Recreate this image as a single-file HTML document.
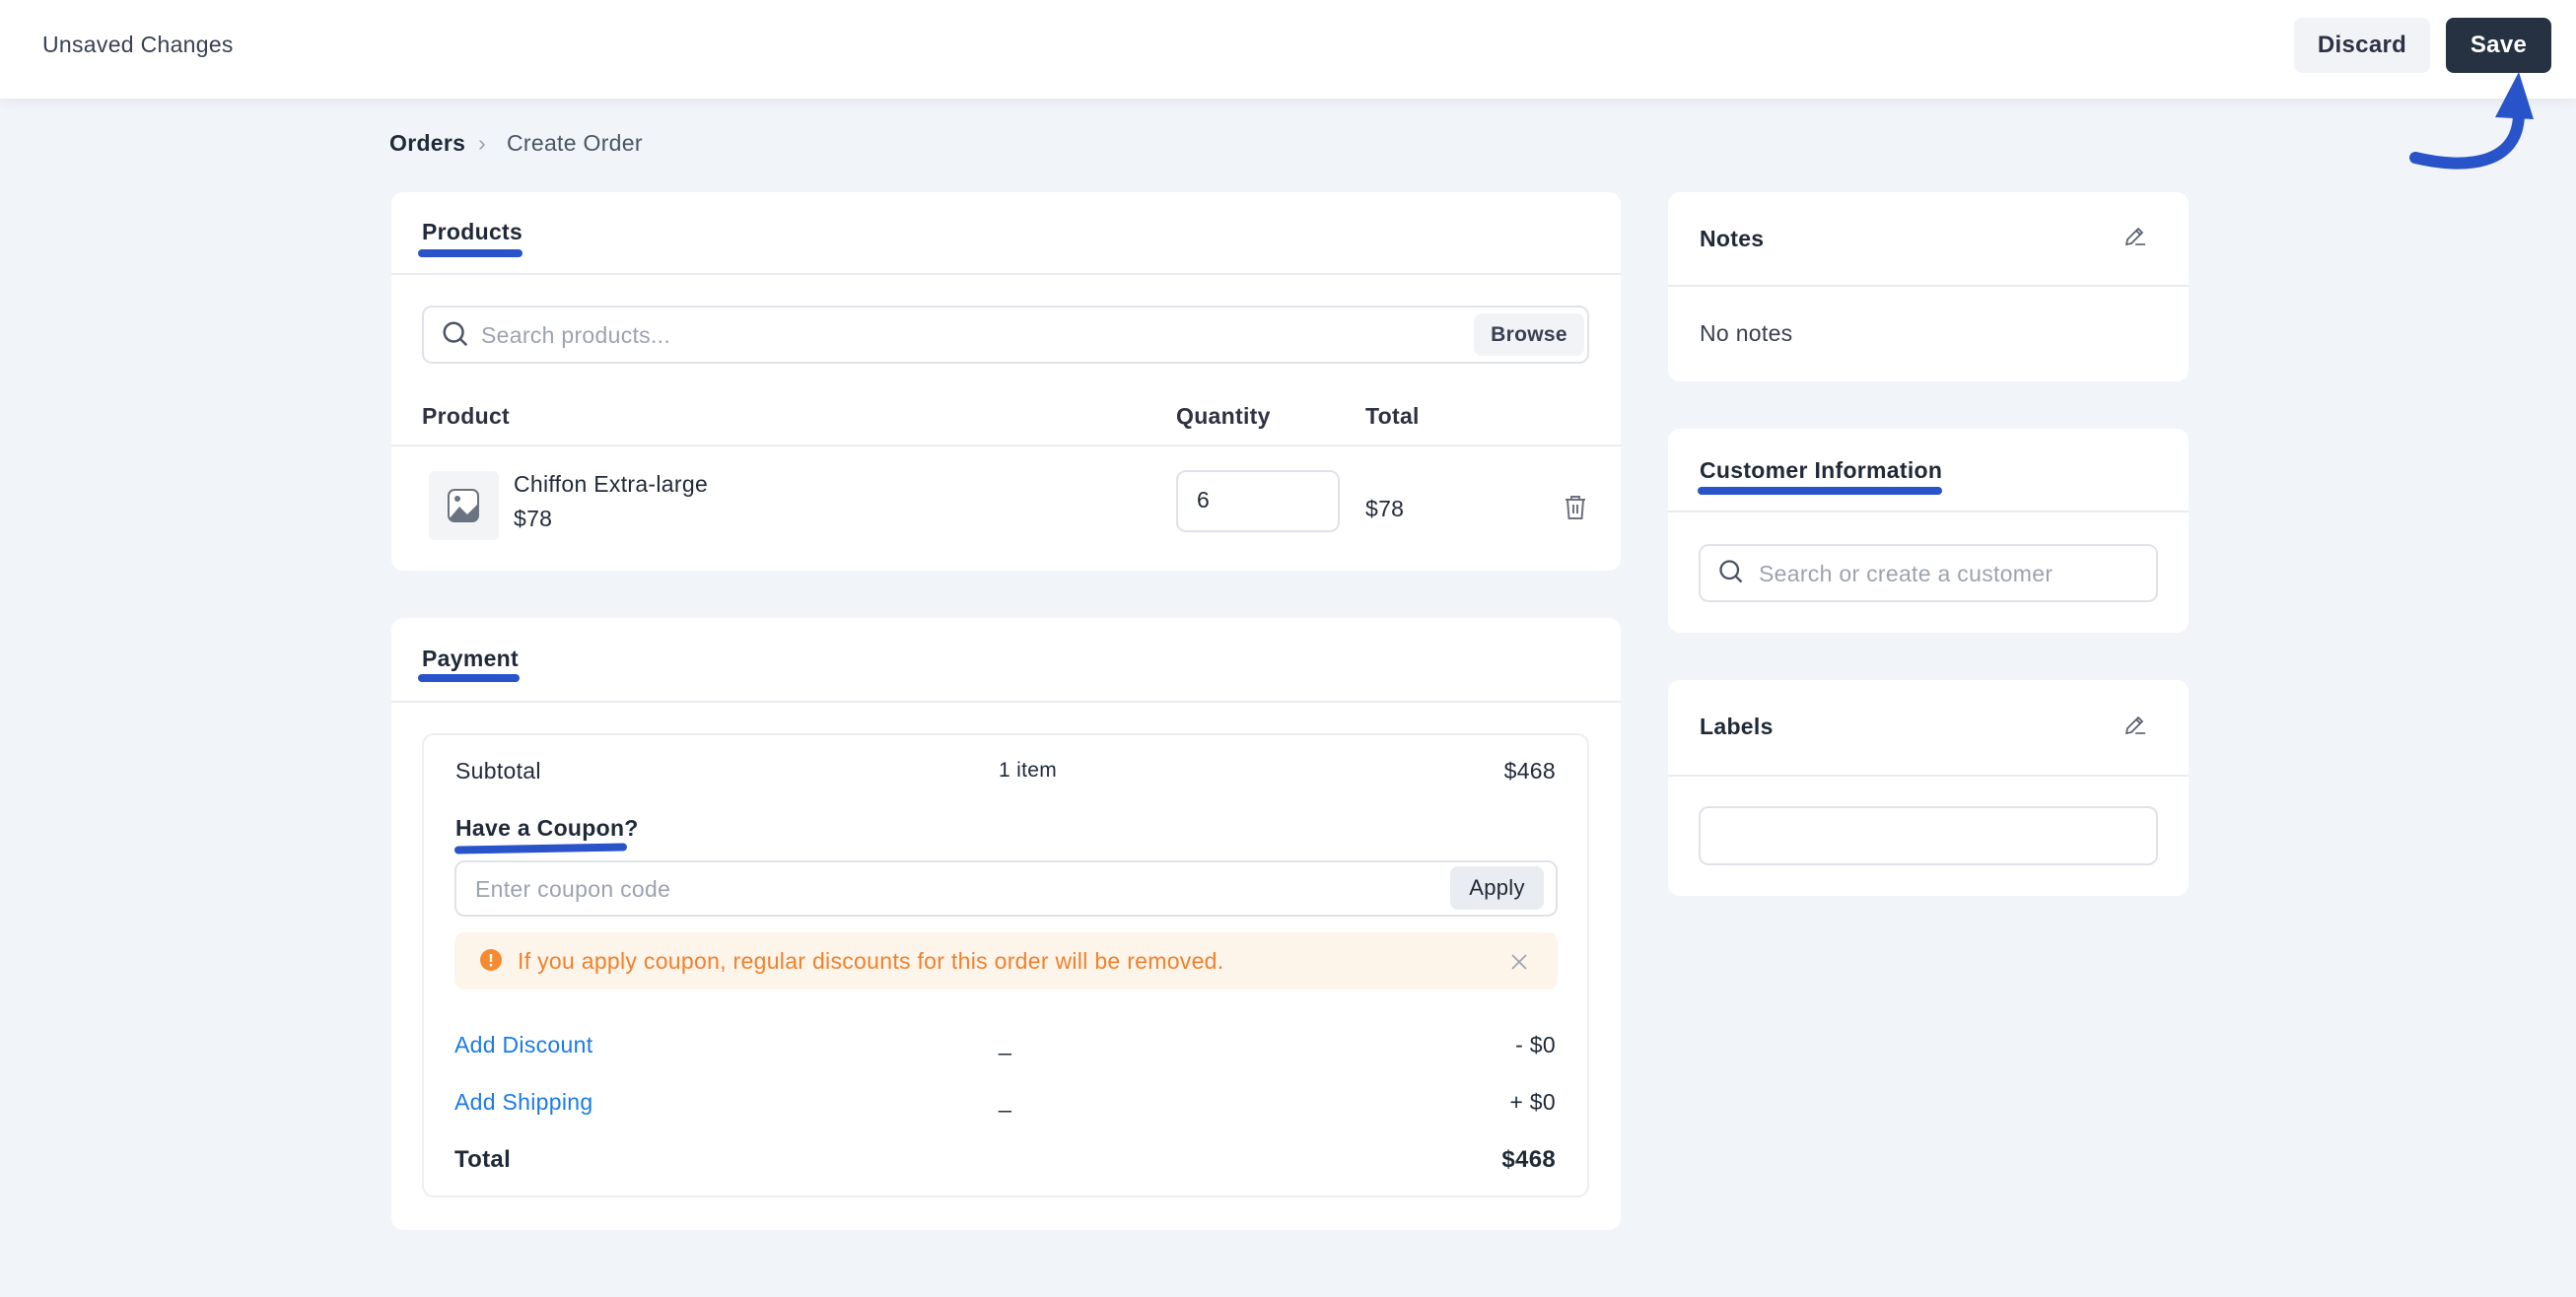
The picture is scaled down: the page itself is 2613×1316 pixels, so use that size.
<!DOCTYPE html>
<html><head><meta charset="utf-8"><style>
*{box-sizing:border-box;margin:0;padding:0}
body{width:2613px;height:1316px;background:#f1f4f9;font-family:"Liberation Sans",sans-serif;color:#1f2937;position:relative;overflow:hidden;font-size:23px;letter-spacing:0.3px}
.a{position:absolute;white-space:nowrap}
.hdr{position:absolute;left:0;top:0;width:2613px;height:100px;background:#fff;box-shadow:0 2px 14px rgba(0,0,0,0.07)}
.card{position:absolute;background:#fff;border-radius:12px}
.line{position:absolute;height:2px;background:#e8ebf0}
.inp{position:absolute;border:2px solid #dfe3e9;border-radius:10px;background:#fff}
.t{line-height:40px;height:40px}
.ttl{font-weight:bold;color:#1f2937}
.ul{position:absolute;height:8px;background:#2853c9;border-radius:4px}
.ph{color:#9ca3af}
.btn{position:absolute;background:#f1f3f6;border-radius:8px;text-align:center;font-weight:bold;color:#374151}
.blue{color:#1a7ae8}
</style></head><body>
<div class="hdr"></div>
<div class="a t" style="left:43px;top:25px;color:#374151">Unsaved Changes</div>
<div class="btn" style="left:2327px;top:18px;width:138px;height:56px;line-height:56px;font-size:24px;color:#2d3142">Discard</div>
<div class="btn" style="left:2481px;top:18px;width:107px;height:56px;line-height:56px;background:#263242;color:#fff;font-size:24px">Save</div>
<svg class="a" style="left:2420px;top:60px" width="190" height="120" viewBox="2420 60 190 120">
<path d="M2450 160 C2500 172 2555 168 2555 115" stroke="#2853c9" stroke-width="12" fill="none" stroke-linecap="round"/>
<path d="M2531 119 L2555 73 L2570 121 Z" fill="#2853c9"/>
</svg>

<div class="a t" style="left:395px;top:125px;font-weight:bold">Orders</div>
<div class="a t" style="left:485px;top:125px;color:#9ca3af">›</div>
<div class="a t" style="left:514px;top:125px;color:#4b5563">Create Order</div>

<!-- Products -->
<div class="card" style="left:397px;top:195px;width:1247px;height:384px"></div>
<div class="a t ttl" style="left:428px;top:215px">Products</div>
<div class="ul" style="left:424px;top:253px;width:106px"></div>
<div class="line" style="left:397px;top:277px;width:1247px"></div>
<div class="inp" style="left:428px;top:310px;width:1184px;height:59px"></div>
<svg class="a" style="left:447px;top:324px" width="30" height="30" viewBox="0 0 24 24" fill="none" stroke="#4b5563" stroke-width="2"><circle cx="10.5" cy="10.5" r="7.5"/><path d="M16 16l5 5"/></svg>
<div class="a t ph" style="left:488px;top:320px">Search products...</div>
<div class="btn" style="left:1495px;top:318px;width:112px;height:43px;line-height:43px;font-size:21px;font-weight:bold">Browse</div>
<div class="a t" style="left:428px;top:402px;font-weight:bold;color:#2d3142">Product</div>
<div class="a t" style="left:1193px;top:402px;font-weight:bold;color:#2d3142">Quantity</div>
<div class="a t" style="left:1385px;top:402px;font-weight:bold;color:#2d3142">Total</div>
<div class="line" style="left:397px;top:451px;width:1247px"></div>
<div class="a" style="left:435px;top:478px;width:71px;height:70px;background:#f3f4f6;border-radius:6px"></div>
<svg class="a" style="left:454px;top:496px" width="32" height="34" viewBox="0 0 32 34"><rect x="1" y="1" width="30" height="32" rx="6" fill="#fff" stroke="#6b7280" stroke-width="2"/><path d="M2 30 L12 18 L20 26 L30 16 L30 32 L2 32Z" fill="#6b7280"/><circle cx="10" cy="10" r="3" fill="#6b7280"/></svg>
<div class="a t" style="left:521px;top:471px">Chiffon Extra-large</div>
<div class="a t" style="left:521px;top:506px">$78</div>
<div class="inp" style="left:1193px;top:477px;width:166px;height:63px"></div>
<div class="a t" style="left:1214px;top:487px">6</div>
<div class="a t" style="left:1385px;top:496px">$78</div>
<svg class="a" style="left:1586px;top:502px" width="24" height="26" viewBox="0 0 24 26" fill="none" stroke="#6b7280" stroke-width="2"><path d="M2 5h20M8 5V2h8v3M4 5l1.5 19h13L20 5M10 10v9M14 10v9"/></svg>

<!-- Payment -->
<div class="card" style="left:397px;top:627px;width:1247px;height:621px"></div>
<div class="a t ttl" style="left:428px;top:648px">Payment</div>
<div class="ul" style="left:424px;top:684px;width:103px"></div>
<div class="line" style="left:397px;top:711px;width:1247px"></div>
<div class="a" style="left:428px;top:744px;width:1184px;height:471px;border:2px solid #eceef2;border-radius:12px"></div>
<div class="a t" style="left:462px;top:762px">Subtotal</div>
<div class="a t" style="left:1013px;top:762px;font-size:21px">1 item</div>
<div class="a t" style="right:1035px;top:762px">$468</div>
<div class="a t ttl" style="left:462px;top:820px">Have a Coupon?</div>
<div class="ul" style="left:461px;top:857px;width:175px;transform:skewY(-1deg)"></div>
<div class="inp" style="left:461px;top:873px;width:1119px;height:57px"></div>
<div class="a t ph" style="left:482px;top:882px">Enter coupon code</div>
<div class="btn" style="left:1471px;top:879px;width:95px;height:44px;line-height:44px;font-size:22px;background:#e9ecf1;font-weight:normal;color:#1f2937">Apply</div>
<div class="a" style="left:461px;top:946px;width:1119px;height:58px;background:#fdf4ea;border-radius:10px"></div>
<svg class="a" style="left:487px;top:963px" width="22" height="22" viewBox="0 0 22 22"><circle cx="11" cy="11" r="11" fill="#f58a2f"/><rect x="9.8" y="5" width="2.4" height="8" fill="#fff"/><rect x="9.8" y="15" width="2.4" height="2.4" fill="#fff"/></svg>
<div class="a t" style="left:525px;top:955px;color:#f0812c">If you apply coupon, regular discounts for this order will be removed.</div>
<svg class="a" style="left:1532px;top:967px" width="18" height="18" viewBox="0 0 18 18" stroke="#9ca3af" stroke-width="1.6"><path d="M2 2l14 14M16 2L2 16"/></svg>
<div class="a t blue" style="left:461px;top:1040px">Add Discount</div>
<div class="a t" style="left:1013px;top:1038px">_</div>
<div class="a t" style="right:1035px;top:1040px">- $0</div>
<div class="a t blue" style="left:461px;top:1098px">Add Shipping</div>
<div class="a t" style="left:1013px;top:1096px">_</div>
<div class="a t" style="right:1035px;top:1098px">+ $0</div>
<div class="a t ttl" style="left:461px;top:1157px;font-size:24px">Total</div>
<div class="a t ttl" style="right:1035px;top:1157px;font-size:24px">$468</div>

<!-- Right -->
<div class="card" style="left:1692px;top:195px;width:528px;height:192px"></div>
<div class="a t ttl" style="left:1724px;top:222px">Notes</div>
<svg class="a" style="left:2154px;top:228px" width="24" height="24" viewBox="0 0 24 24" fill="none" stroke="#4b5563" stroke-width="1.6"><path d="M3 20l1-5L15 4l4 4L8 19z M13 6l4 4 M12 20h10"/></svg>
<div class="line" style="left:1692px;top:289px;width:528px"></div>
<div class="a t" style="left:1724px;top:318px;color:#374151">No notes</div>

<div class="card" style="left:1692px;top:435px;width:528px;height:207px"></div>
<div class="a t ttl" style="left:1724px;top:457px">Customer Information</div>
<div class="ul" style="left:1722px;top:494px;width:248px"></div>
<div class="line" style="left:1692px;top:518px;width:528px"></div>
<div class="inp" style="left:1723px;top:552px;width:466px;height:59px"></div>
<svg class="a" style="left:1742px;top:566px" width="28" height="28" viewBox="0 0 24 24" fill="none" stroke="#4b5563" stroke-width="2"><circle cx="10.5" cy="10.5" r="7.5"/><path d="M16 16l5 5"/></svg>
<div class="a t ph" style="left:1784px;top:562px">Search or create a customer</div>

<div class="card" style="left:1692px;top:690px;width:528px;height:219px"></div>
<div class="a t ttl" style="left:1724px;top:717px">Labels</div>
<svg class="a" style="left:2154px;top:724px" width="24" height="24" viewBox="0 0 24 24" fill="none" stroke="#4b5563" stroke-width="1.6"><path d="M3 20l1-5L15 4l4 4L8 19z M13 6l4 4 M12 20h10"/></svg>
<div class="line" style="left:1692px;top:786px;width:528px"></div>
<div class="inp" style="left:1723px;top:818px;width:466px;height:60px"></div>
</body></html>
